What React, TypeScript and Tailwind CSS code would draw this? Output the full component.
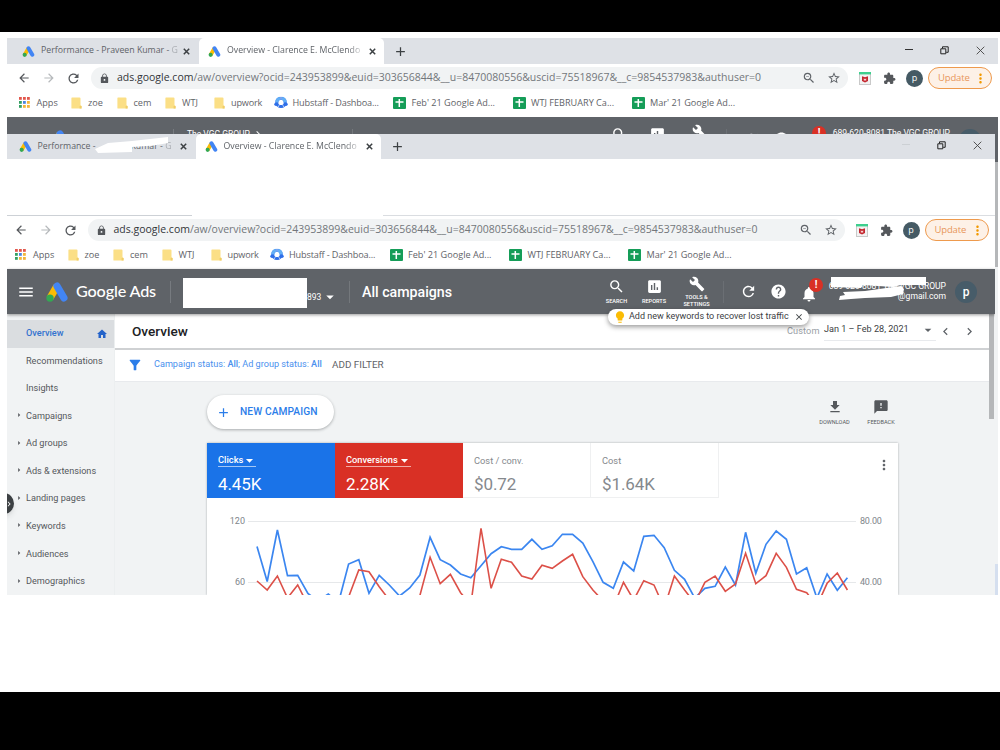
import React from "react";
import {
  MdAdd, MdArrowBack, MdArrowDropDown, MdArrowForward, MdArrowRight, MdAssessment, MdBuild,
  MdChevronLeft, MdChevronRight, MdClose, MdFeedback, MdFileDownload, MdFilterAlt,
  MdHome, MdLightbulb, MdLock, MdMenu, MdMoreVert, MdNotifications, MdRefresh, MdSearch,
  MdStarBorder, MdZoomOut,
} from "react-icons/md";

function AdsLogo({ className }: { className: string }) {
  return (
    <svg viewBox="0 0 22 20" className={className}>
      <path d="M7.6 2.6 L.8 14.4 L7 18 L13.6 7Z" fill="#fbbc04" />
      <path d="M11 4.1 L17.9 15.9" stroke="#4285f4" strokeWidth="7.2" strokeLinecap="round" />
      <circle cx="4" cy="16.1" r="3.7" fill="#34a853" />
    </svg>
  );
}

function ExtensionIcon({ className }: { className: string }) {
  return (
    <svg viewBox="0 0 24 24" fill="currentColor" className={className}>
      <path d="M20.5 11H19V7c0-1.1-.9-2-2-2h-4V3.5C13 2.12 11.88 1 10.5 1S8 2.12 8 3.5V5H4c-1.1 0-1.99.9-1.99 2v3.8H3.5c1.49 0 2.7 1.21 2.7 2.7s-1.21 2.7-2.7 2.7H2V20c0 1.1.9 2 2 2h3.8v-1.5c0-1.49 1.21-2.7 2.7-2.7 1.49 0 2.7 1.21 2.7 2.7V22H17c1.1 0 2-.9 2-2v-4h1.5c1.38 0 2.5-1.12 2.5-2.5S21.88 11 20.5 11z" />
    </svg>
  );
}

function HelpIcon({ className }: { className: string }) {
  return (
    <svg viewBox="0 0 24 24" fill="currentColor" className={className}>
      <path d="M12 2C6.48 2 2 6.48 2 12s4.48 10 10 10 10-4.48 10-10S17.52 2 12 2zm1 17h-2v-2h2v2zm2.07-7.75l-.9.92C13.45 12.9 13 13.5 13 15h-2v-.5c0-1.1.45-2.1 1.17-2.83l1.24-1.26c.37-.36.59-.86.59-1.41 0-1.1-.9-2-2-2s-2 .9-2 2H8c0-2.21 1.79-4 4-4s4 1.79 4 4c0 .88-.36 1.68-.93 2.25z" />
    </svg>
  );
}

function Folder() {
  return (
    <svg viewBox="0 0 11 12" className="h-3 w-[11px] shrink-0">
      <path d="M1 .5h7.5q1 0 1 1V8l1 1v2.5H1q-.6 0-.6-.6V1q0-.5.6-.5z" fill="#fbdf86" />
      <path d="M8.6 9h2v2.5h-2z" fill="#f0cd68" />
    </svg>
  );
}

function AppsGrid() {
  const colors = ["#e2574c", "#e2574c", "#e2574c", "#34a062", "#4b86e0", "#f2b63a", "#34a062", "#f2b63a", "#f2b63a"];
  return (
    <svg viewBox="0 0 11 11" className="size-[11px] shrink-0">
      {colors.map((c, i) => (
        <rect key={i} x={(i % 3) * 4} y={Math.floor(i / 3) * 4} width="2.8" height="2.8" fill={c} />
      ))}
    </svg>
  );
}

function Hubstaff() {
  return (
    <svg viewBox="0 0 14 13" className="h-[13px] w-[14px] shrink-0">
      <circle cx="7" cy="6.4" r="4.2" fill="none" stroke="#2f6fe8" strokeWidth="3" />
      <path d="M2.8 6.4A4.2 4.2 0 0 1 6 2.3M8 2.3A4.2 4.2 0 0 1 11.2 6.4" fill="none" stroke="#62aef6" strokeWidth="3" />
      <circle cx="2" cy="8.2" r="1.7" fill="#2f6fe8" />
      <circle cx="12" cy="8.2" r="1.7" fill="#2f6fe8" />
      <path d="M7 0v3.4M3.6 11.6l1.6-2.4M10.4 11.6L8.8 9.2" stroke="#fff" strokeWidth=".7" />
    </svg>
  );
}

function Sheet() {
  return (
    <svg viewBox="0 0 13 12" className="h-3 w-[13px] shrink-0">
      <rect width="13" height="12" rx="1" fill="#159d58" />
      <path d="M6.3 2v8M2.5 5h8" stroke="#fff" strokeWidth="1.5" />
    </svg>
  );
}

function Tab({ children, active, width }: { children: React.ReactNode; active?: boolean; width: string }) {
  return (
    <div className={`flex h-full shrink-0 items-center ${width} ${active ? "rounded-t-[5px] bg-white" : ""}`}>
      <AdsLogo className="ml-[9px] mr-[6px] h-[11px] w-[13px] shrink-0" />
      {children}
      <svg viewBox="0 0 7 7" className="ml-[8px] size-[7px] shrink-0">
        <path d="M.8.8l5.4 5.4M6.2.8L.8 6.2" stroke="#3c4043" strokeWidth="1.5" />
      </svg>
    </div>
  );
}

function TabStrip({ front }: { front?: boolean }) {
  return (
    <div className={`flex shrink-0 items-center bg-[#dee1e6] text-[8.75px] text-[#5f6368] ${front ? "h-[25px] pl-[2.5px]" : "h-[26px] pl-[6px]"}`}>
      <Tab width="w-[186px]">
        <span className="relative flex w-[134px] whitespace-pre">
          <span>Performance - </span>
          {front ? <span className="w-[38px]" /> : <span>Praveen </span>}
          <span>Kumar - <span className="opacity-40">G</span></span>
          {front && (
            <svg viewBox="0 0 76 18" className="absolute left-[56px] top-[-3px] h-[18px] w-[76px]">
              <path d="M1 12 L14 6 L38 4 L74 0 L74 6 L60 8.5 L38 10 L38 15 L4 16Z" fill="#fff" />
            </svg>
          )}
        </span>
      </Tab>
      <Tab active width="w-[185px]">
        <span className="w-[134px] whitespace-nowrap [mask-image:linear-gradient(to_right,#000_90%,#0004)]">
          Overview - Clarence E. McClendo
        </span>
      </Tab>
      <MdAdd className="ml-[9px] size-[15px] text-[#3c4043]" />
      <div className="ml-auto flex items-center text-[#222]">
        <span className={`mb-1 mr-[27px] h-px w-2 ${front ? "bg-[#ccd0d4]" : "bg-[#333]"}`} />
        <svg viewBox="0 0 9 9" className="mb-[2px] mr-[26.5px] size-[9px]">
          <path d="M.8 2.8h5v5h-5zM2.5 2.5V.8h5.7v5.5H6.2" fill="none" stroke="currentColor" strokeWidth="1" />
        </svg>
        <svg viewBox="0 0 9 9" className="mb-[2px] mr-[13.5px] size-[9px]">
          <path d="M.7.7l7.6 7.6M8.3.7L.7 8.3" stroke="#444" strokeWidth=".9" />
        </svg>
      </div>
    </div>
  );
}

function Toolbar() {
  return (
    <div className="flex h-[28px] w-[990px] shrink-0 items-center">
      <MdArrowBack className="ml-[10px] size-[14px] text-[#55585c]" />
      <MdArrowForward className="ml-[11px] size-[14px] text-[#b6b9bc]" />
      <MdRefresh className="ml-[10px] size-[15px] text-[#55585c]" />
      <div className="ml-[10px] flex h-[22px] w-[757px] items-center rounded-full bg-[#f1f3f4]">
        <MdLock className="ml-[8px] size-[11px] text-[#55585c]" />
        <span className="ml-[7px] w-[680px] whitespace-nowrap text-[10.5px] text-[#73777b]">
          <span className="text-[#33363a]">ads.google.com</span>
          /aw/overview?ocid=243953899&amp;euid=303656844&amp;__u=8470080556&amp;uscid=75518967&amp;__c=9854537983&amp;authuser=0
        </span>
        <MdZoomOut className="ml-[5px] size-[14px] shrink-0 text-[#5f6368]" />
        <MdStarBorder className="ml-[11px] size-[14px] shrink-0 text-[#5f6368]" />
      </div>
      <svg viewBox="0 0 12 13" className="ml-[11px] h-[13px] w-3 shrink-0">
        <rect x=".5" y=".5" width="11" height="12" fill="#f2f2f2" stroke="#c9c9c9" />
        <path d="M0 0h12v2.4H0z" fill="#3ecf8e" />
        <path d="M3 4.3l3 1 3-1v4.6l-3 1.6-3-1.6z" fill="#c4262e" />
        <path d="M4.8 6.2l1.2 1 1.2-1v2.3H4.8z" fill="#f6dada" />
      </svg>
      <ExtensionIcon className="ml-[12px] size-[13px] shrink-0 text-[#55585c]" />
      <span className="ml-[10px] flex size-[17px] shrink-0 items-center justify-center rounded-full bg-[#455a64] pb-px text-[9px] leading-none text-white">p</span>
      <div className="ml-[5px] flex h-[22px] w-[64px] shrink-0 items-center rounded-full border border-[#ee9a4d] bg-[#fdf1e7] text-[9.5px] text-[#e8965a]">
        <span className="ml-[9px] w-[33px] tracking-[-0.15px]">Update</span>
        <MdMoreVert className="ml-[2px] size-[15px] shrink-0 text-[#f29900]" />
      </div>
    </div>
  );
}

const bookmarks = [
  { icon: <AppsGrid />, text: "Apps", cls: "w-[52.5px]", gap: "ml-[7px]" },
  { icon: <Folder />, text: "zoe", cls: "w-[45.5px]", gap: "ml-[6px]" },
  { icon: <Folder />, text: "cem", cls: "w-[48.5px]", gap: "ml-[6px]" },
  { icon: <Folder />, text: "WTJ", cls: "w-[49px]", gap: "ml-[6px]" },
  { icon: <Folder />, text: "upwork", cls: "w-[59.5px]", gap: "ml-[6px] tracking-[-0.2px]" },
  { icon: <Hubstaff />, text: "Hubstaff - Dashboa...", cls: "w-[119.5px]", gap: "ml-[5px] tracking-[-0.15px]" },
  { icon: <Sheet />, text: "Feb' 21 Google Ad...", cls: "w-[119.5px]", gap: "ml-[5.5px]" },
  { icon: <Sheet />, text: "WTJ FEBRUARY Ca...", cls: "w-[119px]", gap: "ml-[5.5px]" },
  { icon: <Sheet />, text: "Mar' 21 Google Ad...", cls: "w-[119px]", gap: "ml-[5.5px]" },
];

function Bookmarks() {
  return (
    <div className="flex h-[22px] shrink-0 items-center pl-[11.5px] text-[9.15px] text-[#5f6368]">
      {bookmarks.map((b) => (
        <div key={b.text} className={`flex shrink-0 items-center whitespace-nowrap ${b.cls}`}>
          {b.icon}
          <span className={b.gap}>{b.text}</span>
        </div>
      ))}
    </div>
  );
}

function HeaderTool({ icon, lines, width }: { icon: React.ReactNode; lines: string[]; width: string }) {
  return (
    <div className={`flex shrink-0 flex-col items-center text-center text-[5.6px] font-medium leading-[6.5px] ${width}`}>
      {icon}
      {lines.map((l) => <span key={l}>{l}</span>)}
    </div>
  );
}

function AdsHeader({ front }: { front?: boolean }) {
  return (
    <div className="flex h-[45px] w-[988px] shrink-0 items-center bg-[#5f6368] font-[Roboto,sans-serif] text-white">
      <MdMenu className={`size-[18px] shrink-0 ${front ? "ml-[10px]" : "ml-[13px]"}`} />
      <AdsLogo className="ml-[11px] h-[20px] w-[22px] shrink-0" />
      <span className="ml-[8px] w-[94px] shrink-0 whitespace-nowrap font-[Lato,sans-serif] text-[16.2px] font-medium tracking-[-0.15px]">Google Ads</span>
      <span className="h-[22px] w-px shrink-0 bg-[#777b80]" />
      {front ? (
        <div className="ml-[12px] flex w-[166px] shrink-0 items-center pt-[3px]">
          <span className="h-[30px] w-[124px] shrink-0 bg-white" />
          <span className="mt-[8px] text-[8.5px] leading-none">893</span>
          <MdArrowDropDown className="mt-[8px] size-[18px]" />
        </div>
      ) : (
        <div className="mb-[11px] ml-[13px] flex w-[165px] shrink-0 items-center text-[8.5px]">
          The VGC GROUP <MdChevronRight className="ml-[2px] size-[12px]" />
        </div>
      )}
      <span className="h-[22px] w-px shrink-0 bg-[#74787c]" />
      <span className="ml-[12px] w-[240px] shrink-0 pt-[2px] text-[14.2px] font-medium">All campaigns</span>
      <HeaderTool width="w-[29px]" lines={["SEARCH"]} icon={<MdSearch className="mb-[3px] size-[17px]" />} />
      <HeaderTool width="w-[46px]" lines={["REPORTS"]} icon={<MdAssessment className="mb-[3px] size-[17px]" />} />
      <HeaderTool width="w-[39px]" lines={["TOOLS &", "SETTINGS"]} icon={<MdBuild className="mb-[2px] size-[16px]" />} />
      <span className="ml-[7px] h-[22px] w-px shrink-0 bg-[#6b6f74]" />
      <MdRefresh className="ml-[16px] size-[17px] shrink-0" />
      <HelpIcon className="ml-[13px] size-[17px] shrink-0" />
      <div className="relative ml-[13px] shrink-0">
        <MdNotifications className="mt-1 size-[18px]" />
        <span className="absolute left-[9px] top-[-3px] flex size-[14px] items-center justify-center rounded-full bg-[#d93025] text-[10px] font-bold leading-none">!</span>
      </div>
      <div className={`relative ml-auto mr-[9px] flex w-[118px] shrink-0 flex-col items-end whitespace-nowrap text-[8.6px] leading-[10px] ${front ? "mb-px" : "mb-[3px]"}`}>
        <span className="tracking-[-0.05px]">689-620-8081 The VGC GROUP</span>
        <span>@gmail.com</span>
        {front && (
          <svg viewBox="0 0 98 24" className="absolute left-[3px] top-[-4px] h-[24px] w-[98px]">
            <path d="M0 0H95V8L70 8L62 10L32 8L30 11L-3 10Z" fill="#fff" />
            <path d="M12 15L34 14L48 12L70 9L73 12L72 17L60 20L34 21L20 22L8 23L9 19L14 18Z" fill="#fff" />
          </svg>
        )}
      </div>
      <span className={`flex size-[22px] shrink-0 items-center justify-center rounded-full bg-[#475c69] text-[12px] font-medium leading-none ${front ? "mr-[18px]" : "mr-[14px]"}`}>p</span>
    </div>
  );
}

const navItems = ["Overview", "Recommendations", "Insights", "Campaigns", "Ad groups", "Ads & extensions", "Landing pages", "Keywords", "Audiences", "Demographics"];

function SideNav() {
  return (
    <nav className="relative flex w-[108px] shrink-0 flex-col overflow-hidden border-r border-[#eceff0] bg-[#f1f3f4] pt-[6px] text-[9.15px] text-[#55585c]">
      {navItems.map((label, i) => (
        <div key={label} className={`flex h-[27.6px] shrink-0 items-center ${i === 0 ? "bg-[#dadde0] font-medium text-[#3372cf]" : ""}`}>
          <span className="flex w-[19px] justify-center pl-[4px]">
            {i > 2 && <MdArrowRight className="mb-[3px] size-[10px]" />}
          </span>
          <span className="whitespace-nowrap">{label}</span>
          {i === 0 && <MdHome className="ml-auto mr-[6px] size-[12px] text-[#2463c9]" />}
        </div>
      ))}
      <span className="absolute left-[-14px] top-[179px] flex size-[21px] items-center justify-end rounded-full bg-[#3c4043] text-white shadow-md">
        <MdChevronRight className="size-[10px]" />
      </span>
    </nav>
  );
}

const clicks = [546.5, 581.5, 530, 575.7, 575.3, 593.5, 601, 594, 603, 564, 559.7, 593.3, 575.3, 585, 596, 588, 575, 537.3, 559.7, 565, 574, 577.7, 565.7, 553.7, 546.7, 549.3, 549.3, 539.3, 549.3, 545.7, 534.3, 534.3, 543, 561.7, 582.3, 588.3, 562, 571, 536.3, 535.3, 547.7, 570.3, 579.3, 598, 588.3, 586.3, 567, 585, 532.3, 573.3, 544.3, 531, 539.3, 574, 567.7, 598, 574, 590.3, 577.7];
const conversions = [581, 590, 576, 598, 585, 605, 620, 620, 620, 597, 570, 571.7, 586.7, 600, 612, 612, 595.5, 557.3, 583.7, 574.3, 592.7, 605, 528.3, 588.3, 559.3, 562.3, 576, 579, 565.3, 568.3, 561, 554.3, 576.7, 590, 601, 607, 582.3, 600, 580.7, 585, 608, 576, 590, 603, 582.3, 576, 591.3, 584, 553.3, 583.7, 575.7, 553.3, 567.3, 589.3, 592.7, 606, 583.3, 573, 590];

const toPoints = (ys: number[]) => ys.map((y, i) => `${(257 + i * 10.18).toFixed(1)},${y}`).join(" ");

function Chart() {
  return (
    <div className="flex h-[97px] overflow-hidden text-[9px] text-[#80868b]">
      <div className="flex w-[38px] flex-col items-end pt-[17px] leading-[12px]">
        <span>120</span>
        <span className="mt-[49px]">60</span>
      </div>
      <svg viewBox="245 498 613 97" className="h-[97px] w-[613px] shrink-0">
        <path d="M248 521.5H856M248 582.5H856" stroke="#e6e8ea" />
        <polyline points={toPoints(clicks)} fill="none" stroke="#3b86f0" strokeWidth="1.7" />
        <polyline points={toPoints(conversions)} fill="none" stroke="#dc5048" strokeWidth="1.6" />
      </svg>
      <div className="flex flex-col pl-[2px] pt-[17px] leading-[12px] tracking-[-0.2px]">
        <span>80.00</span>
        <span className="mt-[49px]">40.00</span>
      </div>
    </div>
  );
}

function Tile({ label, value, tone, filled }: { label: string; value: string; tone: string; filled?: boolean }) {
  return (
    <div className={`flex h-[55px] w-[128px] shrink-0 flex-col items-start pl-[11px] pt-[11px] ${tone}`}>
      <span className={`flex h-[13px] items-center whitespace-nowrap text-[9.3px] ${filled ? "border-b border-white/60 font-medium" : ""}`}>
        {label}
        {filled && <MdArrowDropDown className="mx-[-2px] size-[17px]" />}
      </span>
      <span className="mt-[7px] text-[17px] leading-[20px] tracking-[-0.1px]">{value}</span>
    </div>
  );
}

function Main() {
  return (
    <main className="flex w-[874px] shrink-0 flex-col bg-[#f1f3f4]">
      <div className="flex h-[34px] shrink-0 items-center bg-white pl-[17px]">
        <h1 className="w-[655px] text-[13.6px] font-medium text-[#202124]">Overview</h1>
        <span className="w-[37px] text-[9.2px] tracking-[0.1px] text-[#9aa0a6]">Custom</span>
        <div className="flex h-[20px] w-[112px] items-center border-b border-[#e8eaed] pb-px text-[9.1px] text-[#3c4043]">
          <span className="whitespace-nowrap">Jan 1 – Feb 28, 2021</span>
          <MdArrowDropDown className="ml-auto size-[16px] text-[#5f6368]" />
        </div>
        <MdChevronLeft className="ml-[2px] size-[15px] text-[#5f6368]" />
        <MdChevronRight className="ml-[9px] size-[15px] text-[#5f6368]" />
      </div>
      <div className="flex h-[33px] shrink-0 items-center border-t-2 border-[#cfd1d3] bg-white pb-px pl-[12px]">
        <MdFilterAlt className="size-[16px] text-[#2b7de9]" />
        <span className="ml-[11px] w-[178px] whitespace-nowrap text-[9.12px] text-[#4a90ee]">
          Campaign status: <b className="font-medium">All</b>; Ad group status: <b className="font-medium">All</b>
        </span>
        <span className="text-[9.9px] text-[#5f6368]">ADD FILTER</span>
      </div>
      <div className="flex h-[62px] shrink-0 items-start border-t border-[#e8eaed] pl-[92px] pt-[13px]">
        <button className="flex h-[34px] w-[127px] items-center rounded-full bg-white text-[10.2px] font-medium text-[#2b7de9] shadow-[0_1px_3px_rgba(60,64,67,.4)]">
          <MdAdd className="ml-[9px] size-[15px]" />
          <span className="ml-[9px] whitespace-nowrap tracking-[0.1px]">NEW CAMPAIGN</span>
        </button>
        <div className="ml-[477px] flex text-[5.6px] leading-[7px] text-[#55585c]">
          <span className="flex w-[47px] flex-col items-center pt-[4px]"><MdFileDownload className="mb-[4px] size-[16px]" />DOWNLOAD</span>
          <span className="flex w-[46px] flex-col items-center pt-[4px]"><MdFeedback className="mb-[4px] size-[16px]" />FEEDBACK</span>
        </div>
      </div>
      <section className="ml-[92px] h-[152px] w-[691px] bg-white shadow-[0_0_2px_rgba(60,64,67,.4)]">
        <div className="flex">
          <Tile label="Clicks" value="4.45K" tone="bg-[#1a73e8] text-white" filled />
          <Tile label="Conversions" value="2.28K" tone="bg-[#d93025] text-white" filled />
          <Tile label="Cost / conv." value="$0.72" tone="border-b border-r border-[#eff0f1] text-[#85898d]" />
          <Tile label="Cost" value="$1.64K" tone="border-b border-r border-[#eff0f1] text-[#85898d]" />
          <MdMoreVert className="ml-auto mr-[6px] mt-[14px] size-[16px] text-[#5f6368]" />
        </div>
        <Chart />
      </section>
    </main>
  );
}

export default function App() {
  return (
    <div className="flex h-[750px] w-[1000px] flex-col overflow-hidden bg-white font-['Open_Sans',sans-serif]">
      <div className="h-[32px] shrink-0 bg-black" />
      <div className="ml-[7px] mt-[6px] flex h-[96px] w-[991px] shrink-0 flex-col overflow-hidden bg-white">
        <TabStrip />
        <Toolbar />
        <Bookmarks />
        <div className="mt-[3px] h-[17px] w-full overflow-hidden bg-[#5f6368]">
          <AdsHeader />
        </div>
      </div>
      <div className="flex shrink-0">
        <div className="ml-[7px] flex h-[461px] w-[988px] shrink-0 flex-col overflow-hidden bg-white">
          <TabStrip front />
          <div className="flex h-[57px] shrink-0 items-end justify-between">
            <span className="h-px w-[185px] bg-[#cdd1d6]" />
            <span className="h-px w-[612px] bg-[#dadde1]" />
          </div>
          <div className="ml-[-3.5px] flex flex-col">
            <Toolbar />
            <Bookmarks />
          </div>
          <div className="relative z-10 mt-[3px] shrink-0 shadow-[0_1px_3px_rgba(0,0,0,.4)]">
            <AdsHeader front />
            <div className="absolute left-[601px] top-[40px] flex h-[16px] w-[201px] items-center rounded-full bg-white font-[Roboto,sans-serif] text-[9px] text-[#3c4043] shadow-[0_2px_5px_rgba(0,0,0,.4)]">
              <MdLightbulb className="ml-[5px] size-[14px] text-[#fbbc04]" />
              <span className="ml-[2px] whitespace-nowrap">Add new keywords to recover lost traffic</span>
              <MdClose className="ml-auto mr-[5px] size-[10px]" />
            </div>
          </div>
          <div className="flex min-h-0 grow font-[Roboto,sans-serif]">
            <SideNav />
            <Main />
            <div className="w-[6px] bg-[#f1f3f4]">
              <div className="h-[105px] w-[5px] bg-[#b5b7b9]" />
            </div>
          </div>
        </div>
        <div className="flex w-[3px] flex-col">
          <div className="h-[28px] bg-[#5f6368]" />
          <div className="h-[105px] bg-[#b5b7b9]" />
          <div className="grow bg-[#f1f3f4]" />
          <div className="h-[31px] bg-[#d5dfef]" />
        </div>
      </div>
      <div className="mt-auto h-[58px] shrink-0 bg-black" />
    </div>
  );
}
